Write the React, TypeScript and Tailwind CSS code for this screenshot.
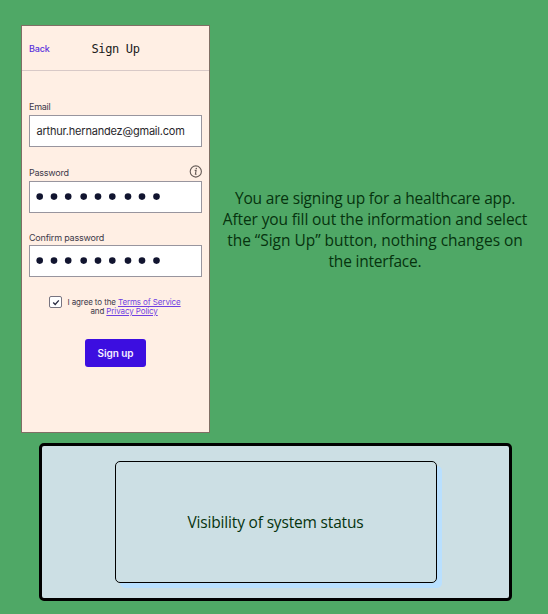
import React from "react";

const DOTS = [9.7, 24, 38.2, 53.7, 68, 82.3, 98, 112, 126.5];

function PasswordDots() {
  return (
    <div className="flex h-8 w-[173px] items-center border border-[#98959e] bg-white">
      <svg width="140" height="8" viewBox="0 0 140 8" fill="#11142f">
        {DOTS.map((x) => (
          <circle key={x} cx={x} cy="3.6" r="3.3" />
        ))}
      </svg>
    </div>
  );
}

function InfoIcon() {
  return (
    <svg width="13" height="13" viewBox="0 0 13 13" fill="none" stroke="#665b57">
      <circle cx="6.8" cy="6.5" r="5.6" strokeWidth="1.1" />
      <path d="M5.7 5.4h1.4L6.4 9.3h1.2" strokeWidth="1.1" />
      <circle cx="7.3" cy="3.5" r=".75" fill="#665b57" stroke="none" />
    </svg>
  );
}

function Phone() {
  return (
    <div className="flex h-[408px] w-[189px] flex-col border border-[#806f65] bg-[#ffefe4] font-['Inter',sans-serif] text-[#3d3949]">
      <header className="flex h-[45px] w-full shrink-0 items-center border-b border-[#d8c9c7] pl-[7px] pt-px">
        <a className="w-[62.5px] text-[9px] font-medium tracking-[-0.15px] text-[#5930dc]">Back</a>
        <h1 className="whitespace-nowrap font-['DejaVu_Sans_Mono',monospace] text-[12px] tracking-[-0.35px] text-[#201b1b]">Sign Up</h1>
      </header>
      <div className="flex flex-col pl-[7px]">
        <label className="mt-[29px] h-[15px] text-[9px] leading-[14px] tracking-[-0.25px]">Email</label>
        <div className="flex h-8 w-[173px] items-center border border-[#98959e] bg-white pl-[6.5px] text-[11px] tracking-[-0.2px] text-[#29272c]">
          <span className="whitespace-nowrap">arthur.hernandez@gmail.com</span>
        </div>
        <div className="mt-[18px] flex h-[16px] w-[173px] items-start justify-between">
          <label className="text-[9px] leading-[15px] tracking-[-0.25px]">Password</label>
          <InfoIcon />
        </div>
        <PasswordDots />
        <label className="mt-[17px] h-[15px] text-[9px] leading-[15px] tracking-[-0.2px]">Confirm password</label>
        <PasswordDots />
      </div>
      <div className="mt-[19px] flex pl-[27px]">
        <span className="flex h-[12px] w-[13px] items-center justify-center rounded-[2px] border border-[#777480] bg-white">
          <svg width="8" height="7" viewBox="0 0 8 7" fill="none" stroke="#292a40" strokeWidth="1.3">
            <path d="M1.2 3.5 3.2 5.5 6.8 1.3" />
          </svg>
        </span>
        <p className="ml-[5.5px] mt-[2px] whitespace-nowrap text-center text-[8px] leading-[9px] tracking-[-0.11px]">
          I agree to the <a className="text-[#6f3fe2] underline">Terms of Service</a>
          <br />
          and <a className="text-[#6f3fe2] underline">Privacy Policy</a>
        </p>
      </div>
      <button className="ml-[63px] mt-[23px] h-[28px] w-[61px] rounded-[3px] bg-[#3c0ee0] text-[10px] font-semibold tracking-[-0.05px] text-[#f5efff]">
        Sign up
      </button>
    </div>
  );
}

export default function App() {
  return (
    <main className="flex h-[614px] w-[548px] flex-col overflow-hidden bg-[#4fa866] pt-[25px] font-['Open_Sans','Noto_Sans',sans-serif] text-[#06330e]">
      <section className="flex pl-[21px]">
        <Phone />
        <div className="ml-[13px] flex w-[304px] flex-col items-center justify-center whitespace-nowrap pt-[2px] text-[15.5px] leading-[21px]">
          <span className="tracking-[-0.18px]">You are signing up for a healthcare app.</span>
          <span className="tracking-[-0.13px]">After you fill out the information and select</span>
          <span className="tracking-[-0.03px]">the “Sign Up” button, nothing changes on</span>
          <span className="tracking-[-0.2px]">the interface.</span>
        </div>
      </section>
      <section className="ml-[39px] mt-[10px] flex h-[158px] w-[473px] justify-center rounded-[5px] border-[3px] border-black bg-[#ccdfe4] pt-[15px]">
        <div className="flex h-[122px] w-[322px] items-center justify-center rounded-[5px] border border-black bg-[#ccdfe4] pt-[2px] text-[15.5px] tracking-[-0.17px] shadow-[5px_5px_0_#b9e0ff]">
          <span className="whitespace-nowrap">Visibility of system status</span>
        </div>
      </section>
    </main>
  );
}
